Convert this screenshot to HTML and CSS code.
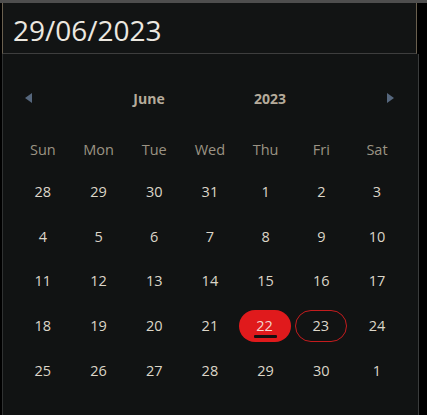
FILE: index.html
```html
<!DOCTYPE html>
<html>
<head>
<meta charset="utf-8">
<link rel="stylesheet" href="styles.css">
</head>
<body>
<div class="picker">
  <div class="field">29/06/2023</div>
  <div class="calendar">
    <div class="head">
      <svg class="arrow" width="7" height="10" viewBox="0 0 7 10"><path d="M7 0 L0 5 L7 10 Z" fill="#56677d"/></svg>
      <div class="titles">
        <span class="title">June</span>
        <span class="title">2023</span>
      </div>
      <svg class="arrow" width="7" height="10" viewBox="0 0 7 10"><path d="M0 0 L7 5 L0 10 Z" fill="#56677d"/></svg>
    </div>
    <div class="grid">
      <div class="wd">Sun</div><div class="wd">Mon</div><div class="wd">Tue</div><div class="wd">Wed</div><div class="wd">Thu</div><div class="wd">Fri</div><div class="wd">Sat</div>
      <div class="d">28</div><div class="d">29</div><div class="d">30</div><div class="d">31</div><div class="d">1</div><div class="d">2</div><div class="d">3</div>
      <div class="d">4</div><div class="d">5</div><div class="d">6</div><div class="d">7</div><div class="d">8</div><div class="d">9</div><div class="d">10</div>
      <div class="d">11</div><div class="d">12</div><div class="d">13</div><div class="d">14</div><div class="d">15</div><div class="d">16</div><div class="d">17</div>
      <div class="d">18</div><div class="d">19</div><div class="d">20</div><div class="d">21</div><div class="d"><span class="pill today">22</span></div><div class="d"><span class="pill outline">23</span></div><div class="d">24</div>
      <div class="d">25</div><div class="d">26</div><div class="d">27</div><div class="d">28</div><div class="d">29</div><div class="d">30</div><div class="d">1</div>
    </div>
  </div>
</div>
</body>
</html>
```

FILE: styles.css
```css
html, body {
  margin: 0;
  padding: 0;
  background: #000;
  height: 100%;
  overflow: hidden;
}
body {
  box-sizing: border-box;
  border-top: 3px solid #4e4e4e;
  font-family: "Open Sans", "DejaVu Sans", sans-serif;
}
.picker {
  width: 417px;
  margin-left: 2px;
}
.field {
  box-sizing: border-box;
  width: 415px;
  height: 51px;
  background: #121414;
  border-left: 1px solid #6a604f;
  border-right: 1px solid #6a604f;
  border-bottom: 1px solid #3e3e3e;
  color: #ece8e0;
  font-size: 28px;
  line-height: 50px;
  padding-left: 10px;
  padding-top: 2px;
}
.calendar {
  box-sizing: border-box;
  width: 417px;
  height: 361px;
  background: #111313;
  border-left: 1px solid #303232;
  border-right: 1px solid #3a3c3c;
  padding: 29px 13px 0 12px;
}
.head {
  display: flex;
  align-items: center;
  height: 30px;
  padding: 0 11px 0 10px;
}
.arrow {
  flex: none;
}
.titles {
  flex: 1;
  display: flex;
  justify-content: center;
}
.title {
  width: 121px;
  text-align: center;
  font-weight: 700;
  font-size: 14px;
  color: #b5ab9b;
}
.grid {
  margin-top: 16px;
  display: grid;
  grid-template-columns: repeat(7, 55.7px);
  grid-template-rows: 40px repeat(5, 44.7px);
}
.wd {
  display: flex;
  align-items: center;
  justify-content: center;
  font-size: 14.5px;
  color: #9b9384;
}
.d {
  display: flex;
  align-items: center;
  justify-content: center;
  font-size: 14.5px;
  color: #dcd6c8;
}
.pill {
  position: relative;
  box-sizing: border-box;
  width: 52px;
  height: 32px;
  border-radius: 16px;
  display: flex;
  align-items: center;
  justify-content: center;
  margin-top: 1px;
}
.today {
  background: #e01a1c;
  color: #f2d6ce;
  margin-left: -2px;
}
.today::after {
  content: "";
  position: absolute;
  left: 15px;
  bottom: 4px;
  width: 23px;
  height: 3px;
  border-radius: 1px;
  background: #141010;
}
.outline {
  border: 1px solid #c41c1e;
  margin-left: -1px;
}
```
